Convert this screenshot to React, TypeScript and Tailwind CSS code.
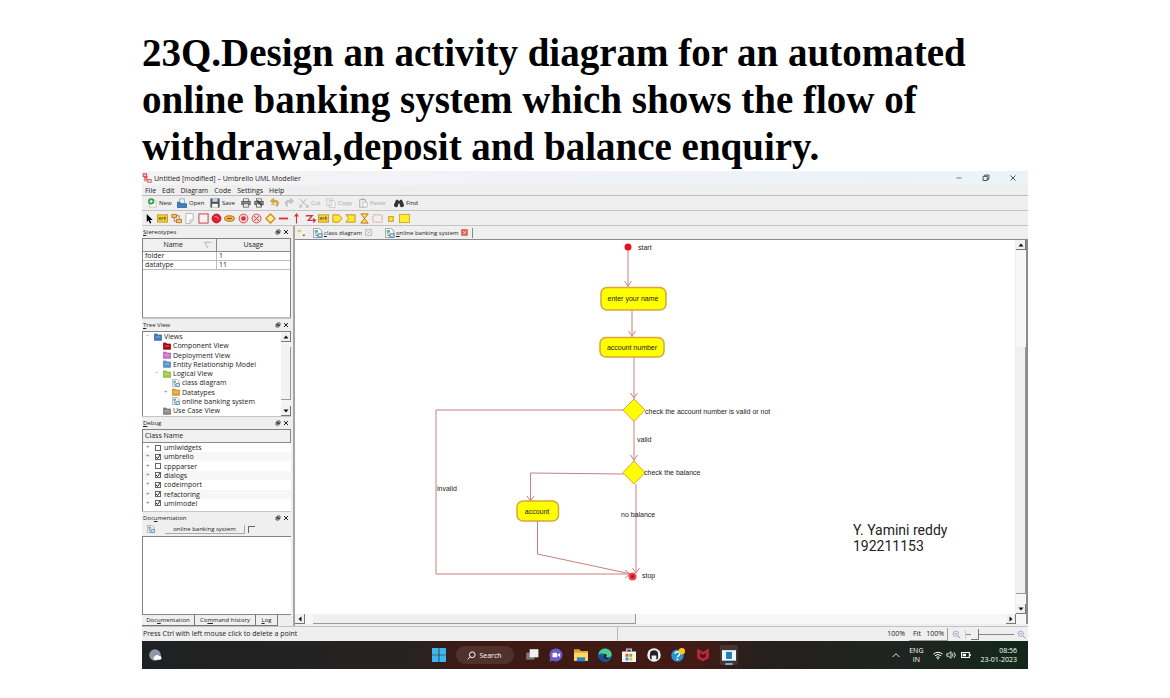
import type { ReactNode } from "react";

function Glyph({ children, size = "size-[10px]" }: { children: ReactNode; size?: string }) {
  return (
    <svg viewBox="0 0 12 12" className={`${size} shrink-0`} fill="none" aria-hidden="true">
      {children}
    </svg>
  );
}

function UmbrelloLogo() {
  return (
    <Glyph>
      <path d="M1.5 1h4v3h-4zM2 4l5 5M7 4.500 3 7" stroke="#d8504c" strokeWidth="1.3" />
      <circle cx="4" cy="8.500" r="1.800" fill="#e88d86" />
      <rect x="7" y="8" width="4" height="3" fill="#fff" stroke="#c33" />
    </Glyph>
  );
}

const printer = (
  <>
    <rect x="3" y="1" width="6" height="3" fill="#fff" stroke="#666" />
    <rect x="1" y="4" width="10" height="4" fill="#888" stroke="#555" />
    <rect x="3" y="7" width="6" height="4" fill="#eee" stroke="#666" />
  </>
);

type Action = { label: string; icon: ReactNode; text?: boolean; muted?: boolean; box: string };

const actions: Action[] = [
  {
    label: "New", text: true, box: "w-[30px]",
    icon: (
      <>
        <path d="M3 2h6l2 2v7H3z" fill="#fdfdfd" stroke="#bbb" />
        <circle cx="5" cy="4" r="3.800" fill="#2f9e44" />
        <path d="M5 2v4M3 4h4" stroke="#fff" strokeWidth="1.200" />
      </>
    ),
  },
  {
    label: "Open", text: true, box: "w-[33px]",
    icon: (
      <>
        <path d="M3 1h6v6H3z" fill="#e8eef4" stroke="#9ab" />
        <path d="M0.500 5h3l1 2h7v4.500H.5z" fill="#3b82c4" stroke="#2b6297" />
      </>
    ),
  },
  {
    label: "Save", text: true, box: "w-[31px]",
    icon: (
      <>
        <path d="M.5.500h11v11H.5z" fill="#4a5560" />
        <path d="M3 .500h6v4H3z" fill="#cfd6dc" />
        <path d="M2.500 7h7v4.500h-7z" fill="#f5f5f5" />
      </>
    ),
  },
  { label: "Print", box: "w-[13px]", icon: printer },
  {
    label: "Print preview", box: "w-[16px]",
    icon: (
      <>
        {printer}
        <path d="M4 3 9 9" stroke="#333" strokeWidth="1.500" />
      </>
    ),
  },
  { label: "Undo", box: "w-[14px]", icon: <path d="M4 .500.500 3.500 4 7V5c4-.500 5 1 4 5.500C12 6.500 11 2.500 4 2.500zM1 8h7" fill="#e2a93a" stroke="#c38a1d" strokeWidth=".7" /> },
  { label: "Redo", box: "w-[15px]", icon: <path d="M8 .500 11.500 3.500 8 7V5C4 4.500 3 6 4 10.500 0 6.500 1 2.500 8 2.500z" fill="#c9c9c9" stroke="#aaa" strokeWidth=".7" /> },
  {
    label: "Cut", text: true, muted: true, box: "w-[27px]",
    icon: (
      <>
        <path d="M1 1 9 9M9 1 3 8" stroke="#aaa" />
        <circle cx="10" cy="10" r="1.300" stroke="#aaa" />
        <circle cx="2" cy="10" r="1.300" stroke="#aaa" />
      </>
    ),
  },
  {
    label: "Copy", text: true, muted: true, box: "w-[32px]",
    icon: <path d="M1 1h6v8H1zM4 3h5l2 2v6.500H4z" fill="#f6f6f6" stroke="#c4c4c4" />,
  },
  {
    label: "Paste", text: true, muted: true, box: "w-[36px]",
    icon: (
      <>
        <path d="M2 2h7v9H2z" fill="#eee" stroke="#aaa" />
        <path d="M4 .500h3v2H4z" fill="#aaa" />
        <path d="M6 5h5v6H6z" fill="#fafafa" stroke="#bbb" />
      </>
    ),
  },
  {
    label: "Find", text: true, box: "w-[28px]",
    icon: <path d="M2.500 2h2L6 4l1.500-2h2L12 8a2.500 2.500 0 0 1-5 1V7H5v2A2.500 2.500 0 0 1 0 8z" fill="#333" />,
  },
];

const xyzLabel = (
  <>
    <rect x=".5" y="2" width="11" height="8" fill="#f5d23c" stroke="#c79a1c" />
    <path d="m2 4.500 2 3m0-3-2 3m3.500-3v3m0-1.500 1.500-1.500M8.500 4v4m-1-2.500H10" stroke="#544300" strokeWidth=".8" />
  </>
);

const tools: { label: string; icon: ReactNode }[] = [
  { label: "Select", icon: <path d="M3 1v9l2-2 1.500 3.500 1.500-.7L6.500 7.500h3z" fill="#000" /> },
  { label: "Label", icon: xyzLabel },
  {
    label: "Associated artifacts",
    icon: (
      <>
        <path d="M1 1.500h5v3.500H1zM6 7h5.500v3.500H6z" fill="#f2c558" stroke="#b9722c" />
        <path d="M3.500 5v4H6M6 3h3v4" stroke="#d06a4b" />
      </>
    ),
  },
  { label: "Note", icon: <path d="M2 .500h8v7l-3.500 4H2zM10 7.500H6.500v4" fill="#fdfdfd" stroke="#b5b5b5" /> },
  { label: "Box", icon: <rect x="1" y="1" width="10" height="10" fill="#f7f1f1" stroke="#c8343d" /> },
  {
    label: "Initial activity",
    icon: (
      <>
        <circle cx="6" cy="6" r="4.800" fill="#e1202b" stroke="#ad1720" />
        <path d="M4 4a3 3 0 0 1 4 3" stroke="#f7a5a8" />
      </>
    ),
  },
  {
    label: "Activity",
    icon: (
      <>
        <ellipse cx="6" cy="6" rx="5.500" ry="3" fill="#f0b545" stroke="#a8691c" />
        <path d="M3.500 6h5" stroke="#7a4a10" />
      </>
    ),
  },
  {
    label: "End activity",
    icon: (
      <>
        <circle cx="6" cy="6" r="4.800" fill="#f8d3d3" stroke="#cf3d45" />
        <circle cx="6" cy="6" r="2.500" fill="#d8323c" />
      </>
    ),
  },
  { label: "Final activity", icon: <><circle cx="6" cy="6" r="4.800" fill="#f9dada" stroke="#cf3d45" /><path d="m3 3 6 6m0-6L3 9" stroke="#cf3d45" /></> },
  { label: "Branch", icon: <path d="m6 1 5 5-5 5-5-5z" fill="#fff1a0" stroke="#d18a22" strokeWidth="1.500" /> },
  { label: "Fork horizontal", icon: <path d="M1 6h10" stroke="#d6323b" strokeWidth="2" /> },
  { label: "Transition", icon: <path d="M6 11.500V1M4 4l2-3 2 3" stroke="#d6323b" strokeWidth="1.200" /> },
  { label: "Exception", icon: <path d="M1 3h7L3.500 8H11M9 6l2.500 2L9 10.500" stroke="#d6323b" strokeWidth="1.400" /> },
  { label: "Pre condition", icon: xyzLabel },
  { label: "Send signal", icon: <path d="M1 2h6.500L11 6l-3.500 4H1z" fill="#ffe92e" stroke="#c78d1c" /> },
  { label: "Accept signal", icon: <path d="M1 2h10v8H1l3-4z" fill="#ffe92e" stroke="#c78d1c" /> },
  { label: "Time event", icon: <path d="M2 1h8L2 11h8z" fill="#ffe92e" stroke="#c0632a" /> },
  { label: "Region", icon: <rect x="1" y="2" width="10" height="8" rx="1" stroke="#c88f95" strokeDasharray="2 1" /> },
  { label: "Pin", icon: <rect x="4" y="4" width="5" height="5" fill="#ffe92e" stroke="#c78d1c" /> },
  { label: "Object node", icon: <rect x=".5" y="1.500" width="11" height="9" fill="#ffef2e" stroke="#d3a52b" /> },
];

function FolderIcon({ fill, line }: { fill: string; line: string }) {
  return (
    <Glyph size="size-[8px]">
      <path d="M.5 1.500h4l1 1.500h6v8H.5z" fill={fill} stroke={line} />
      <path d="M2.500 6h7" stroke="#fff" strokeOpacity=".6" />
    </Glyph>
  );
}

function DiagramIcon({ size = "size-[8px]" }: { size?: string }) {
  return (
    <Glyph size={size}>
      <path d="M.5.500h7l3 3v8H.5z" fill="#fbfbfb" stroke="#8e8e8e" />
      <rect x="2" y="2.500" width="4" height="3" fill="#6fa8a0" />
      <rect x="6" y="7" width="5" height="4" fill="#cde3f5" stroke="#3d7ca6" />
      <path d="M3.500 5.500v3.500H6" stroke="#3d7ca6" />
    </Glyph>
  );
}

const treeRows: { label: string; indent: string; icon: ReactNode; toggle?: string }[] = [
  { label: "Views", indent: "pl-[3px]", toggle: "−", icon: <FolderIcon fill="#3f7cc0" line="#2b5d97" /> },
  { label: "Component View", indent: "pl-[12px]", icon: <FolderIcon fill="#b3060f" line="#7d0008" /> },
  { label: "Deployment View", indent: "pl-[12px]", icon: <FolderIcon fill="#cb74cf" line="#a154a6" /> },
  { label: "Entity Relationship Model", indent: "pl-[12px]", icon: <FolderIcon fill="#5a96d6" line="#3d76b5" /> },
  { label: "Logical View", indent: "pl-[12px]", toggle: "−", icon: <FolderIcon fill="#9fce3e" line="#7ba72a" /> },
  { label: "class diagram", indent: "pl-[21px]", icon: <DiagramIcon /> },
  { label: "Datatypes", indent: "pl-[21px]", toggle: "+", icon: <FolderIcon fill="#eaa52f" line="#bd7f1a" /> },
  { label: "online banking system", indent: "pl-[21px]", icon: <DiagramIcon /> },
  { label: "Use Case View", indent: "pl-[12px]", icon: <FolderIcon fill="#8b8b8b" line="#666" /> },
];

const debugClasses = [
  { name: "umlwidgets", on: false },
  { name: "umbrello", on: true },
  { name: "cppparser", on: false },
  { name: "dialogs", on: true },
  { name: "codeimport", on: true },
  { name: "refactoring", on: true },
  { name: "umlmodel", on: true },
];

function Arrow({ dir, label }: { dir: "up" | "down" | "left" | "right"; label: string }) {
  const paths = { up: "M6 3 11 9H1z", down: "M6 9 11 3H1z", left: "M3 6l6-5v10z", right: "M9 6 3 1v10z" };
  return (
    <button aria-label={label} className="flex size-[10px] shrink-0 items-center justify-center border-r border-b border-[#777] bg-[#f1f1f1]">
      <Glyph size="size-[6px]">
        <path d={paths[dir]} fill="#111" />
      </Glyph>
    </button>
  );
}

function DockTitle({ hot, before = "", rest }: { hot: string; before?: string; rest: string }) {
  return (
    <div className="flex h-[12px] shrink-0 items-center justify-between pr-[2px] pl-[1px] text-[6px] leading-[8px]">
      <h2>{before}<u>{hot}</u>{rest}</h2>
      <div className="flex gap-[2px]">
        <button aria-label="Float panel" className="flex">
          <Glyph size="size-[6px]">
            <path d="M4 2h6v5H4zM2 5h6v5H2z" fill="#eee" stroke="#333" strokeWidth="1.600" />
          </Glyph>
        </button>
        <button aria-label="Close panel" className="flex">
          <Glyph size="size-[6px]">
            <path d="m2 2 8 8m0-8-8 8" stroke="#222" strokeWidth="2" />
          </Glyph>
        </button>
      </div>
    </div>
  );
}

const frame = "border-t border-l border-[#828282] bg-white";

function LeftDock() {
  return (
    <aside className="flex w-[149px] shrink-0 flex-col">
      <section className="flex h-[92px] flex-col">
        <DockTitle hot="S" rest="tereotypes" />
        <div className={`flex-1 border-r border-b border-b-[#bbb] ${frame}`}>
          <table className="w-full table-fixed border-collapse text-[7px] leading-[8px]">
            <thead>
              <tr className="h-[12px] bg-[#f0f0f0]">
                <th className="border-r border-b border-[#8a8a8a] font-normal">
                  <span className="flex items-center justify-end gap-[21px] pr-1">
                    Name
                    <Glyph size="size-[8px]"><path d="M1 2h10M1 2l5 9" stroke="#999" /></Glyph>
                  </span>
                </th>
                <th className="border-b border-[#8a8a8a] font-normal">Usage</th>
              </tr>
            </thead>
            <tbody>
              {[["folder", "1"], ["datatype", "11"]].map(([name, usage]) => (
                <tr key={name}>
                  <td className="border-r border-b border-[#bdbdbd] pl-[2px]">{name}</td>
                  <td className="border-b border-[#bdbdbd] pl-[2px]">{usage}</td>
                </tr>
              ))}
            </tbody>
          </table>
        </div>
      </section>

      <section className="flex h-[98px] flex-col border-t border-[#c5c5c5]">
        <DockTitle hot="T" rest="ree View" />
        <div className={`flex flex-1 ${frame}`}>
          <ul className="flex flex-1 flex-col justify-between pb-px text-[7px] leading-[9px]">
            {treeRows.map((row) => (
              <li key={row.label} className={`flex items-center whitespace-nowrap ${row.indent}`}>
                <span className="w-[8px] shrink-0 text-[6px] text-[#777]">{row.toggle}</span>
                {row.icon}
                <span className="pl-[2px]">{row.label}</span>
              </li>
            ))}
          </ul>
          <div className="flex w-[10px] flex-col bg-[#f4f4f4]">
            <Arrow dir="up" label="Scroll tree up" />
            <div className="mt-[5px] mb-[6px] flex-1 border-r border-b border-[#9a9a9a] bg-[#f2f2f2]" />
            <Arrow dir="down" label="Scroll tree down" />
          </div>
        </div>
      </section>

      <section className="flex h-[95px] flex-col border-t border-[#c5c5c5]">
        <DockTitle hot="D" rest="ebug" />
        <div className={`flex-1 ${frame}`}>
          <div className="h-[13px] border-r border-b border-[#8a8a8a] bg-[#f0f0f0] pl-[2px] text-[7px] leading-[12px]">Class Name</div>
          <ul className="flex h-[65px] flex-col justify-between text-[7px] leading-[9px]">
            {debugClasses.map((item) => (
              <li key={item.name} className="even:bg-[#f7f7f7]">
                <label className="flex items-center pl-[3px]">
                  <span className="w-[8px] text-[6px] text-[#666]">+</span>
                  <span className="grid size-[7px] place-items-center">
                    <input type="checkbox" defaultChecked={item.on} className="peer col-start-1 row-start-1 size-[6px] appearance-none border border-[#666] bg-white" />
                    <svg viewBox="0 0 12 12" className="invisible col-start-1 row-start-1 size-[6px] peer-checked:visible" fill="none" aria-hidden="true">
                      <path d="m2 6 3 3 5-7" stroke="#222" strokeWidth="2" />
                    </svg>
                  </span>
                  <span className="pl-[3px]">{item.name}</span>
                </label>
              </li>
            ))}
          </ul>
        </div>
      </section>

      <section className="flex flex-1 flex-col border-t border-[#c5c5c5]">
        <DockTitle before="Doc" hot="u" rest="mentation" />
        <div className="flex h-[10px] items-center pl-[5px] text-[6px] leading-[8px]">
          <DiagramIcon />
          <div className="ml-[10px] flex-1 border-r border-b border-[#aaa] text-center">online banking system</div>
          <input type="checkbox" aria-label="Lock documentation" className="mr-[36px] ml-[3px] size-[7px] appearance-none border-t border-l border-[#666]" />
        </div>
        <textarea aria-label="Documentation" className={`mt-[2px] w-full flex-1 resize-none ${frame}`} />
        <div className="flex h-[12px] items-start border-t border-[#888] text-[6px] leading-[10px]">
          <button className="w-[53px] border-r border-b border-[#777] bg-[#efefef]">Doc<u>u</u>mentation</button>
          <button className="w-[61px] border-r border-b border-[#777]">Co<u>m</u>mand history</button>
          <button className="w-[22px] border-r border-b border-[#777]"><u>L</u>og</button>
        </div>
      </section>
    </aside>
  );
}

function Diagram() {
  const head = (x: number, y: number) => `M${x - 3.5} ${y - 5}L${x} ${y}L${x + 3.5} ${y - 5}`;
  return (
    <svg viewBox="295 240 720 374" preserveAspectRatio="xMinYMin meet" className="block h-[374px] w-full min-w-0 flex-1 bg-white" role="img" aria-label="Activity diagram">
      <g fill="none" stroke="#c98080" strokeWidth="1">
        <path d={`M628 250V287${head(628, 286)}`} />
        <path d={`M632 310V337${head(632, 336)}`} />
        <path d={`M634 357V399${head(634, 398)}`} />
        <path d={`M634 421V461${head(634, 460)}`} />
        <path d="M623 410H436V574H629M625 570 630 574 625 578" />
        <path d={`M624 474L530.500 473V501${head(530.5, 501)}`} />
        <path d="M537.500 521V554L631 574" />
        <path d={`M636 484V573${head(636, 573)}`} />
      </g>
      <g fill="#ffff00" stroke="#dba53a" strokeWidth="1.500">
        <rect x="601" y="287.500" width="65" height="22.500" rx="6" />
        <rect x="600" y="337.500" width="64" height="19.500" rx="6" />
        <rect x="517" y="501" width="41.500" height="20" rx="6" />
        <path d="m634 399 11 11-11 11.500L623 410zM634 461l11 11.500-11 11.500-11-11.500z" strokeWidth="1" />
      </g>
      <circle cx="628" cy="247" r="3.500" fill="#e3131c" />
      <circle cx="632.500" cy="576.500" r="4" fill="#ee4a4f" />
      <circle cx="632.500" cy="576.500" r="2" fill="#c8101a" />
      <g fill="#222" fontFamily="'Liberation Sans', Arial, sans-serif" fontSize="7">
        <text x="638" y="250">start</text>
        <text x="633" y="301" textAnchor="middle">enter your name</text>
        <text x="632" y="350" textAnchor="middle">account number</text>
        <text x="645" y="414">check the account number is valid or not</text>
        <text x="637" y="442">valid</text>
        <text x="644" y="475">check the balance</text>
        <text x="437" y="491">invalid</text>
        <text x="537" y="514" textAnchor="middle">account</text>
        <text x="621" y="517">no balance</text>
        <text x="642" y="578">stop</text>
      </g>
      <g fill="#222" fontFamily="Roboto, sans-serif" fontSize="14">
        <text x="853" y="535">Y. Yamini reddy</text>
        <text x="853" y="551">192211153</text>
      </g>
    </svg>
  );
}

function Workspace() {
  return (
    <main className="ml-[2px] flex min-w-0 flex-1 flex-col border-l-2 border-[#a5a5a5] pb-[2px]">
      <div className="flex h-[13px] items-center text-[6px] leading-[8px]">
        <button aria-label="New diagram" className="flex w-[18px] pl-px">
          <Glyph>
            <path d="M2 2h4v3H2z" fill="#f1cd45" />
            <path d="M8 8h3L9.500 10z" fill="#222" />
          </Glyph>
        </button>
        <div className="flex w-[72px] items-center gap-px">
          <DiagramIcon size="size-[10px]" />
          <button><u>c</u>lass diagram</button>
          <button aria-label="Close class diagram" className="flex pl-[2px]">
            <Glyph size="size-[7px]"><path d="M1 1h10v10H1zM4 4l4 4m0-4-4 4" stroke="#999" /></Glyph>
          </button>
        </div>
        <div className="flex w-[88px] items-center gap-px border-r border-[#888]">
          <DiagramIcon size="size-[10px]" />
          <button><u>o</u>nline banking system</button>
          <button aria-label="Close online banking system" className="flex pl-px">
            <Glyph size="size-[7px]"><path d="M1 1h10v10H1z" fill="#e46a4a" stroke="#b64a35" /><path d="m4 4 4 4m0-4L4 8" stroke="#fff" strokeWidth="1.500" /></Glyph>
          </button>
        </div>
      </div>
      <div className="flex border-t border-r-2 border-[#8b8b8b] bg-white">
        <Diagram />
        <div className="flex w-[11px] flex-col border-l border-[#eee] bg-[#f7f7f7]">
          <Arrow dir="up" label="Scroll up" />
          <div className="mt-[97px] mb-[10px] flex-1 border-r border-b border-[#9a9a9a] bg-[#f0f0f0]" />
          <Arrow dir="down" label="Scroll down" />
        </div>
      </div>
      <div className="flex h-[10px] border-r-2 border-[#8b8b8b] bg-[#f7f7f7] pr-[10px]">
        <Arrow dir="left" label="Scroll left" />
        <div className="ml-[8px] w-[323px] border-r border-b border-[#999] bg-[#f0f0f0]" />
        <div className="flex-1" />
        <Arrow dir="right" label="Scroll right" />
      </div>
    </main>
  );
}

function Magnifier() {
  return (
    <Glyph size="size-[9px]">
      <circle cx="5" cy="5" r="3.500" fill="#e8eef8" stroke="#8d98b5" />
      <path d="m8 8 3 3M3.500 5h3" stroke="#8d98b5" strokeWidth="1.300" />
    </Glyph>
  );
}

function StatusBar() {
  return (
    <footer className="flex h-[15px] border-t border-[#c2c2c2] text-[7px] leading-[14px]">
      <p className="w-[475px] shrink-0 pl-px">Press Ctrl with left mouse click to delete a point</p>
      <div className="flex flex-1 items-center justify-end border-l border-[#bbb] pr-[2px]">
        <span className="pr-[4px]">100%</span>
        <div className="flex h-[13px] w-[39px] items-center justify-between border-r border-b border-[#999] pr-[3px] pl-[4px]">
          <button>Fit</button>
          <button>100%</button>
        </div>
        <button aria-label="Zoom out" className="flex w-[18px] justify-center border-r border-[#ccc]"><Magnifier /></button>
        <input
          type="range"
          aria-label="Zoom"
          defaultValue={12}
          className="mr-[3px] h-[12px] w-[48px] appearance-none bg-[linear-gradient(#888,#888)] bg-[length:100%_1px] bg-center bg-no-repeat [&::-webkit-slider-thumb]:h-[11px] [&::-webkit-slider-thumb]:w-[8px] [&::-webkit-slider-thumb]:appearance-none [&::-webkit-slider-thumb]:border-r [&::-webkit-slider-thumb]:border-b [&::-webkit-slider-thumb]:border-[#777] [&::-webkit-slider-thumb]:bg-[#efefef]"
        />
        <button aria-label="Zoom in" className="flex"><Magnifier /></button>
      </div>
    </footer>
  );
}

const apps: { label: string; icon: ReactNode; active?: boolean }[] = [
  { label: "Task view", icon: <><path d="M1 4h7v6H1z" fill="#777" /><path d="M4 1h7.500v7H4z" fill="#eee" /></> },
  { label: "Chat", icon: <><path d="M6 .500a5.500 5.500 0 1 1-2.500 10.400L.5 11.500 1 8.500A5.500 5.500 0 0 1 6 .500z" fill="#6d5bc9" /><rect x="3" y="4" width="4" height="4" rx="1" fill="#fff" /><path d="m7.500 5.500 2-1.300v3.600l-2-1.300z" fill="#fff" /></> },
  { label: "File Explorer", icon: <><path d="M0 1h4.500L6 2.500h6V11H0z" fill="#e0a52a" /><path d="M0 4h12v7H0z" fill="#fdd667" /><path d="M2.500 8h7v3.500h-7z" fill="#2a83c6" /></> },
  { label: "Edge", icon: <><circle cx="6" cy="6" r="5.800" fill="#1277bd" /><path d="M.3 5.500C1.500-.500 10-1.500 11.700 5c.4 3-3.700 3.500-5.200 2.300C8 5 4 3.500.3 5.500z" fill="#4fcf8c" /><path d="M4.200 5.500C3 9 7 11 10.500 9.500 8 13 1 12 1 7c0-1 1.500-2 3.200-1.500z" fill="#0e519c" /><path d="M6 5.200c2 0 1.800 2.300.5 2.300C8 9 10 9 11 8c-2 3-7 1.500-6.300-1.500z" fill="#301815" /></> },
  { label: "Store", icon: <><path d="M0 3h12v9H0z" fill="#f4f4f4" /><path d="M4 3V1h4v2" stroke="#ccc" strokeWidth="1.200" /><path d="M3 5h2.500v2.500H3z" fill="#e7513b" /><path d="M6.300 5h2.500v2.500H6.300z" fill="#6fb52b" /><path d="M3 8.200h2.500v2.500H3z" fill="#20a0e0" /><path d="M6.300 8.200h2.500v2.500H6.300z" fill="#f5b920" /></> },
  { label: "Omen", icon: <><circle cx="6" cy="6" r="5.800" fill="#f0f0f0" /><path d="M6 2a3.500 3.500 0 0 1 3.500 3.500V9L8 10V6.500H4V10L2.500 9V5.500A3.500 3.500 0 0 1 6 2z" fill="#222" /></> },
  { label: "Get Help", icon: <><circle cx="5.500" cy="6.500" r="5.300" fill="#2a93cf" /><path d="M3.500 5c0-2.500 4-2.500 4 0 0 1.500-2 1.500-2 3m0 1v1.300" stroke="#fff" strokeWidth="1.300" /><circle cx="9.300" cy="2.700" r="2.700" fill="#ffc51f" /></> },
  { label: "McAfee", icon: <path d="m1 .500 5 3 5-3v8l-5 3-5-3zM3.500 4v3.500L6 9l2.500-1.500V4L6 6z" fill="#c1273a" fillRule="evenodd" /> },
  { label: "Umbrello", active: true, icon: <><path d="M0 1h12v9H0z" fill="#eef6fb" /><path d="M3.500 2.500h5v6h-5z" fill="#1e7fc0" /></> },
];

function Taskbar() {
  return (
    <nav aria-label="Taskbar" className="grid h-[28px] grid-cols-[1fr_306px_1fr] items-center bg-[linear-gradient(90deg,#202122_0%,#252322_30%,#3d1a15_36%,#431a15_62%,#24201e_70%,#202420_85%,#12281a_100%)] text-[7px] leading-[9px] text-white">
      <button aria-label="Weather" className="ml-[6px] flex size-[14px]">
        <Glyph size="size-[14px]">
          <circle cx="6" cy="6" r="5" fill="#8f98ab" />
          <path d="M5 10a2 2 0 0 1 1-3 2 2 0 0 1 3.500 0 1.500 1.500 0 0 1 1 3z" fill="#fff" />
        </Glyph>
      </button>
      <div className="flex h-full items-center justify-between">
        <button aria-label="Start" className="flex">
          <Glyph size="size-[14px]">
            <path d="M0 0h5.700v5.700H0zM6.300 0H12v5.700H6.300zM0 6.300h5.700V12H0zM6.300 6.300H12V12H6.300z" fill="#3fb5ee" />
          </Glyph>
        </button>
        <button className="flex h-[18px] w-[58px] items-center gap-[3px] rounded-full bg-white/10 pl-[11px]">
          <Glyph size="size-[9px]"><circle cx="7" cy="5" r="3.800" stroke="#fff" strokeWidth="1.300" /><path d="m4 8-3 3" stroke="#fff" strokeWidth="1.300" /></Glyph>
          Search
        </button>
        {apps.map((app) => (
          <button
            key={app.label}
            aria-label={app.label}
            className={app.active ? "flex h-[20px] w-[18px] flex-col items-center justify-between rounded-xs bg-white/10 pt-[4px]" : "flex w-[14px]"}
          >
            <Glyph size="size-[14px]">{app.icon}</Glyph>
            {app.active && <span className="h-[2px] w-[8px] shrink-0 rounded-full bg-[#5fb8ea]" />}
          </button>
        ))}
      </div>
      <div className="flex items-center justify-end pr-[11px]">
        <button aria-label="Hidden icons" className="mr-[9px] flex"><Glyph size="size-[8px]"><path d="m1 9 5-5 5 5" stroke="#fff" strokeWidth="1.300" /></Glyph></button>
        <span className="mr-[10px] text-center">ENG<br />IN</span>
        <Glyph><path d="M.5 5a8 8 0 0 1 11 0M2.300 7a5.500 5.500 0 0 1 7.400 0M4 9a3 3 0 0 1 4 0" stroke="#fff" strokeWidth="1.200" /><circle cx="6" cy="10.500" r="1" fill="#fff" /></Glyph>
        <span className="ml-[3px] flex"><Glyph><path d="M1 4.500h2L6 2v8L3 7.500H1zM7.500 4a3 3 0 0 1 0 4M9.500 2.500a5 5 0 0 1 0 7" stroke="#fff" /></Glyph></span>
        <span className="mr-[9px] ml-[5px] flex"><Glyph><path d="M.5 3h9.500v6H.5zM11.500 5v2" stroke="#fff" strokeWidth="1.300" /><path d="M2 4.500h4v3H2z" fill="#fff" /></Glyph></span>
        <time className="text-right">08:56<br />23-01-2023</time>
      </div>
    </nav>
  );
}

export default function App() {
  return (
    <div className="min-h-screen bg-white px-[142px] pt-[29px] pb-[29px]">
      <h1 className="font-['Liberation_Serif',serif] text-[39px] leading-[47px] font-bold text-black">
        23Q.Design an activity diagram for an automated online banking system which shows the flow of withdrawal,deposit and balance enquiry.
      </h1>
      <div className="mt-px flex flex-col bg-[#efefef] font-['Open_Sans',sans-serif] text-[#222]">
        <header className="flex h-[14px] items-center bg-[linear-gradient(90deg,#f5f3f4,#f0f2fa_55%,#eaf4f6)] pr-[10px]">
          <UmbrelloLogo />
          <span className="flex-1 pl-[2px] text-[7px] leading-[9px]">Untitled [modified] – Umbrello UML Modeller</span>
          <div className="flex gap-[17px]">
            <button aria-label="Minimize" className="flex"><Glyph><path d="M3 6h6" stroke="#666" /></Glyph></button>
            <button aria-label="Restore" className="flex"><Glyph><path d="M2.500 4h5v5h-5zM4.500 4V2.500H9.500v5H7.500" stroke="#333" /></Glyph></button>
            <button aria-label="Close" className="flex"><Glyph><path d="m3 3 6 6m0-6L3 9" stroke="#333" /></Glyph></button>
          </div>
        </header>
        <div role="menubar" className="flex h-[11px] items-center gap-[6px] border-b border-[#bdbdbd] pl-[3px] text-[7px] leading-[9px]">
          {["File", "Edit", "Diagram", "Code", "Settings", "Help"].map((item) => (
            <button role="menuitem" key={item}>{item}</button>
          ))}
        </div>
        <div role="toolbar" aria-label="Main" className="flex h-[15px] items-center border-b border-[#c4c4c4] pl-[5px] text-[6px] leading-[8px]">
          {actions.map((action) => (
            <button key={action.label} aria-label={action.label} className={`flex shrink-0 items-center gap-[2px] ${action.box} ${action.muted ? "text-[#a5a5a5]" : ""}`}>
              <Glyph>{action.icon}</Glyph>
              {action.text && <span>{action.label}</span>}
            </button>
          ))}
        </div>
        <div role="toolbar" aria-label="Activity tools" className="flex h-[15px] items-center border-b border-[#c4c4c4] pl-[2px]">
          <div className="flex w-[266px] justify-between">
            {tools.map((tool) => (
              <button key={tool.label} aria-label={tool.label} className="flex">
                <Glyph size="size-[11px]">{tool.icon}</Glyph>
              </button>
            ))}
          </div>
        </div>
        <div className="flex">
          <LeftDock />
          <Workspace />
        </div>
        <StatusBar />
        <Taskbar />
      </div>
    </div>
  );
}
